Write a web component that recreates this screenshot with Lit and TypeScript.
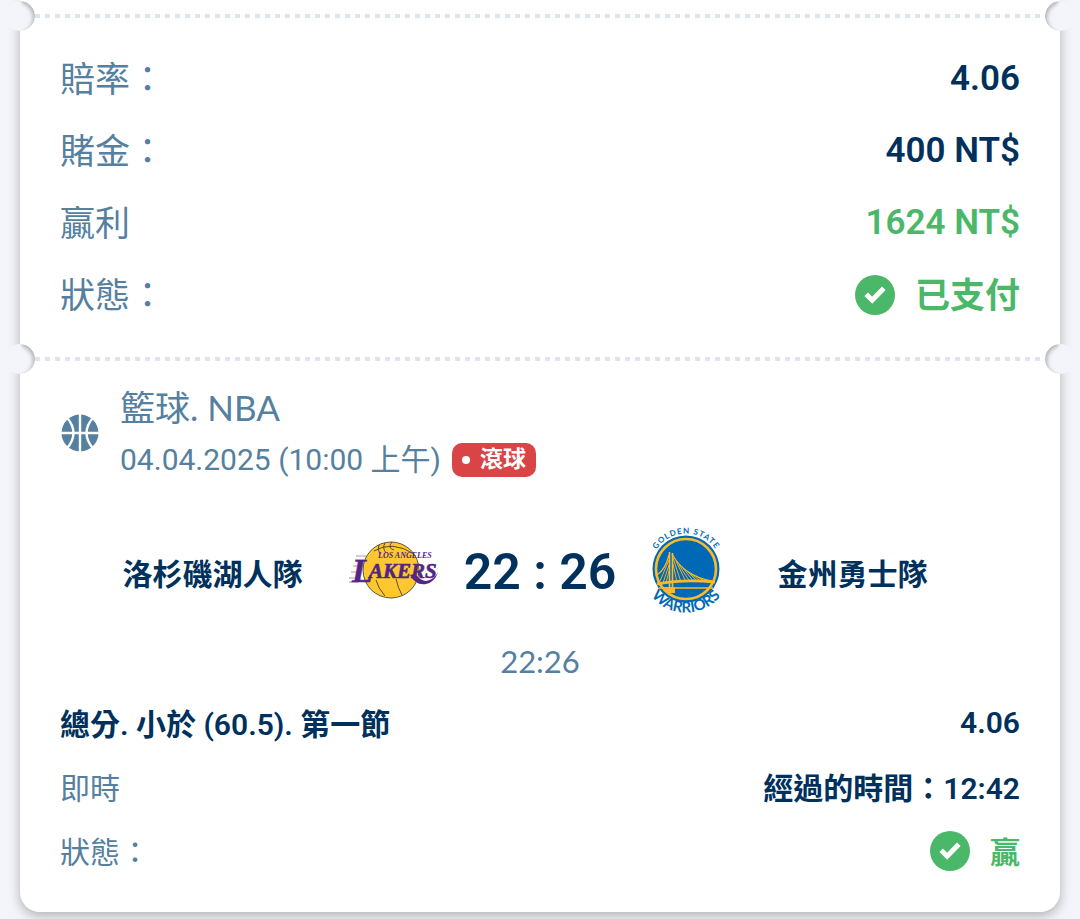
import { LitElement, html, svg, css } from "lit";
import { customElement, property } from "lit/decorators.js";

interface Row {
  label: string;
  value: string;
  tone?: "good";
  check?: boolean;
}

const summary: Row[] = [
  { label: "賠率：", value: "4.06" },
  { label: "賭金：", value: "400 NT$" },
  { label: "贏利", value: "1624 NT$", tone: "good" },
  { label: "狀態：", value: "已支付", tone: "good", check: true },
];

const outcome: Row[] = [
  { label: "總分. 小於 (60.5). 第一節", value: "4.06" },
  { label: "即時", value: "經過的時間：12:42" },
  { label: "狀態：", value: "贏", tone: "good", check: true },
];

const hasHan = (text: string) => /[\u4e00-\u9fff]/.test(text);

@customElement("ticket-divider")
export class TicketDivider extends LitElement {
  static styles = css`
    :host {
      display: flex;
      align-items: center;
      height: 30px;
      margin: 0 -15px;
    }
    .notch {
      flex: none;
      width: 30px;
      height: 30px;
      border-radius: 50%;
      background: #f4f5fa;
    }
    .notch::after {
      content: "";
      display: block;
      height: 100%;
      border-radius: 50%;
      box-shadow: inset -3px 2px 4px -1px rgba(0, 0, 0, 0.28);
      -webkit-mask: linear-gradient(90deg, transparent 48%, #000 62%);
      mask: linear-gradient(90deg, transparent 48%, #000 62%);
    }
    .right::after {
      box-shadow: inset 3px 2px 4px -1px rgba(0, 0, 0, 0.28);
      -webkit-mask: linear-gradient(270deg, transparent 48%, #000 62%);
      mask: linear-gradient(270deg, transparent 48%, #000 62%);
    }
    .dashes {
      flex: 1;
      height: 4px;
      background: repeating-linear-gradient(90deg, #dfe3ee 0 5px, transparent 5px 10px);
    }
  `;
  render() {
    return html`<span class="notch left"></span><span class="dashes"></span><span class="notch right"></span>`;
  }
}

@customElement("check-mark")
export class CheckMark extends LitElement {
  static styles = css`
    :host {
      display: block;
      width: 40px;
      height: 40px;
    }
    svg {
      display: block;
    }
  `;
  render() {
    return html`<svg width="40" height="40" viewBox="0 0 40 40" aria-hidden="true">
      <circle cx="20" cy="20" r="20" fill="#4bb768" />
      <path d="M11.2 19.3 17.2 25.3 28.8 13.2" fill="none" stroke="#fff" stroke-width="5" />
    </svg>`;
  }
}

@customElement("detail-list")
export class DetailList extends LitElement {
  @property({ attribute: false }) rows: Row[] = [];
  @property({ type: Boolean, reflect: true }) compact = false;

  static styles = css`
    :host {
      display: block;
      font-size: 35px;
      --row: 72px;
    }
    :host([compact]) {
      font-size: 30px;
      --row: 64px;
    }
    dl {
      margin: 0;
    }
    .row {
      display: flex;
      align-items: center;
      justify-content: space-between;
      height: var(--row);
      line-height: 40px;
    }
    dt {
      color: #5580a0;
    }
    .han {
      padding-top: 4px;
    }
    :host([compact]) .row:first-child dt {
      color: #00315c;
      font-weight: 600;
    }
    dd {
      display: flex;
      align-items: center;
      gap: 20px;
      margin: 0;
      color: #00315c;
      font-weight: 600;
    }
    .good {
      color: #4bb768;
    }
  `;
  render() {
    return html`<dl>
      ${this.rows.map(
        (r) => html`<div class="row">
          <dt class="han">${r.label}</dt>
          <dd class=${r.tone ?? ""}>
            ${r.check ? html`<check-mark></check-mark>` : null}<span class=${hasHan(r.value) ? "han" : ""}
              >${r.value}</span
            >
          </dd>
        </div>`
      )}
    </dl>`;
  }
}

const basketball = svg`
  <circle cx="20" cy="20" r="18.5" fill="#5580a0" />
  <path d="M20 0V40M0 20H40M6.5 4Q20.500 20 6.500 36M33.500 4Q19.500 20 33.500 36" fill="none" stroke="#fff" stroke-width="2.400" />
`;

const lakers = svg`
  <circle cx="51" cy="48" r="28" fill="#fdc82f" stroke="#5b553f" stroke-width="1" />
  <g fill="none" stroke="#4a3b20" stroke-width="0.900">
    <path d="M34 29Q52 18 74 32" />
    <path d="M39 23Q37 27 40 32M45 21Q42 26 46 31M52 20Q47 26 54 28" />
    <path d="M36 58Q38 66 45 74M56 57Q58 66 62 73" />
  </g>
  <g stroke="#8a65a6" stroke-width="0.700">
    <path d="M16 34H26M15 38H24M13 44H22M11 50H20M9 56H18M9 60H18" />
  </g>
  <text x="38" y="36" class="city">LOS ANGELES</text>
  <text x="12" y="60" class="nick cap">L</text>
  <text x="29" y="56" class="nick">AKERS</text>
  <path d="M70 53Q76 64 86 62Q95 60 98 50Q94 58 86 59Q81 59 75 52Z" fill="#552583" />
`;

const warriors = svg`
  <circle cx="46" cy="49" r="33.500" fill="#0069b5" />
  <circle cx="46" cy="49" r="30" fill="none" stroke="#fdb927" stroke-width="2.600" />
  <g stroke="#fdb927" fill="none">
    <path d="M29.500 32V68M32.500 33V68" stroke-width="1.600" />
    <path d="M29 35Q25 50 17 55M32 34Q44 56 72 61" stroke-width="1.200" />
    <path d="M29 40 20 61M29 45 23 63M29 51 26 63M33 38 41 62M33 44 37 62M36 41 46 62M39 45 50 62M43 48 54 62M47 51 58 62M51 54 62 62M56 56 66 62" stroke-width="0.900" />
    <path d="M17 64Q44 59 75 62" stroke-width="2.800" />
    <path d="M19 68H73" stroke-width="1.500" />
  </g>
  <path d="M24 67H35V73H28Z" fill="#fdb927" />
  <defs>
    <path id="arc-top" d="M10.500 49A35.500 35.500 0 0 1 81.500 49" />
    <path id="arc-bottom" d="M1.500 48A44.500 44.500 0 0 0 90.500 48" />
  </defs>
  <text class="golden"><textPath href="#arc-top" startOffset="50%">GOLDEN STATE</textPath></text>
  <text class="warriors"><textPath href="#arc-bottom" startOffset="50%">WARRIORS</textPath></text>
`;

@customElement("app-root")
export class AppRoot extends LitElement {
  static styles = css`
    :host {
      display: block;
      padding: 0 20px 7px;
      background: #f4f5fa;
      font-family: Roboto, "Noto Sans CJK TC", sans-serif;
      color: #5580a0;
    }
    .card {
      padding-top: 1px;
      border-radius: 0 0 20px 20px;
      background: #fff;
      box-shadow: 0 4px 12px rgba(0, 0, 0, 0.28);
    }
    .summary {
      padding: 12px 40px 13px;
    }
    .event {
      padding: 6px 40px 29px;
    }
    .head {
      display: flex;
      align-items: center;
      gap: 20px;
    }
    .head svg {
      flex: none;
    }
    h2 {
      margin: 0;
      font-size: 35px;
      font-weight: 400;
      line-height: 54px;
      font-family: Lato, "Noto Sans CJK TC", sans-serif;
    }
    .when {
      display: flex;
      align-items: center;
      gap: 11px;
      font-size: 30px;
      line-height: 52px;
    }
    .live {
      display: flex;
      align-items: center;
      gap: 10px;
      height: 34px;
      padding: 0 10px;
      border-radius: 10px;
      background: #d94546;
      color: #fff;
      font-size: 23px;
      font-weight: 700;
    }
    .dot {
      width: 8px;
      height: 8px;
      border-radius: 50%;
      background: #fff;
    }
    .match {
      display: grid;
      grid-template-columns: 1fr 100px 200px 100px 1fr;
      align-items: center;
      padding: 36px 40px 0;
      text-align: center;
    }
    .team {
      margin-right: 15px;
      color: #00315c;
      font-size: 30px;
      font-weight: 600;
    }
    .logo {
      display: block;
      overflow: visible;
    }
    .score {
      color: #00315c;
      font-size: 50px;
      font-weight: 600;
    }
    .periods {
      margin: 0;
      padding: 19px 0 10px;
      text-align: center;
      font: 31px / 40px Lato, sans-serif;
    }
    .city {
      font: italic 700 8px "Liberation Serif", serif;
      fill: #552583;
    }
    .nick {
      font: italic 700 21px "Liberation Serif", serif;
      fill: #552583;
      stroke: #552583;
      stroke-width: 0.6px;
    }
    .cap {
      font-size: 34px;
    }
    .golden {
      font: 700 8px Lato, sans-serif;
      letter-spacing: 1px;
      text-anchor: middle;
      fill: #0069b5;
    }
    .warriors {
      font: 700 15px Lato, sans-serif;
      text-anchor: middle;
      fill: #0069b5;
    }
  `;

  render() {
    return html`<main class="card">
      <ticket-divider></ticket-divider>
      <section class="summary"><detail-list .rows=${summary}></detail-list></section>
      <ticket-divider></ticket-divider>
      <section class="event">
        <header class="head">
          <svg width="40" height="40" viewBox="0 0 40 40" aria-hidden="true">${basketball}</svg>
          <div>
            <h2>籃球. NBA</h2>
            <div class="when">
              <time datetime="2025-04-04T10:00">04.04.2025 (10:00 上午)</time>
              <span class="live"><span class="dot"></span>滾球</span>
            </div>
          </div>
        </header>
        <div class="match">
          <span class="team">洛杉磯湖人隊</span>
          <svg class="logo" width="100" height="100" viewBox="0 0 100 100" aria-hidden="true">${lakers}</svg>
          <span class="score">22 : 26</span>
          <svg class="logo" width="100" height="100" viewBox="0 2 100 100" aria-hidden="true">${warriors}</svg>
          <span class="team">金州勇士隊</span>
        </div>
        <p class="periods">22:26</p>
        <detail-list compact .rows=${outcome}></detail-list>
      </section>
    </main>`;
  }
}
